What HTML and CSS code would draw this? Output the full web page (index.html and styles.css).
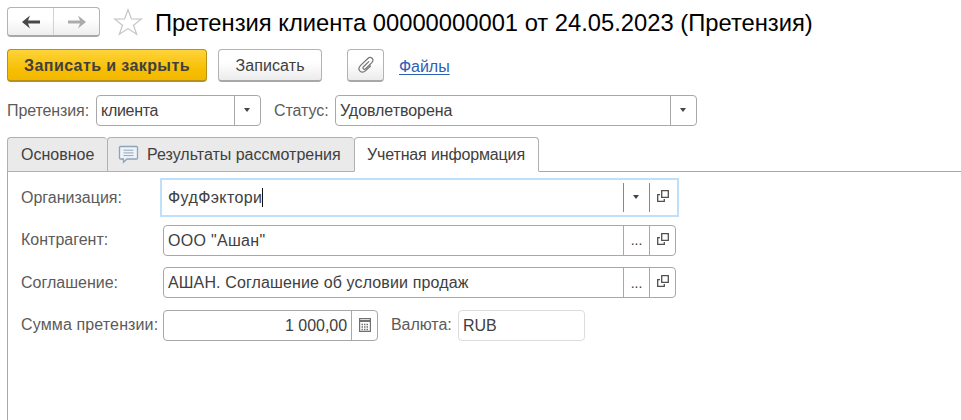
FILE: index.html
```html
<!DOCTYPE html>
<html lang="ru">
<head>
<meta charset="utf-8">
<title>Претензия клиента</title>
<link rel="stylesheet" href="styles.css">
</head>
<body>
<header class="titlebar">
  <div class="nav">
    <button class="nav-btn" aria-label="Назад"><svg width="18" height="14" viewBox="0 0 18 14"><path d="M0 7 8 .5 6 5.500H18v3H6L8 13.500z" fill="#484848"/></svg></button>
    <button class="nav-btn nav-next" aria-label="Вперед"><svg width="18" height="14" viewBox="0 0 18 14"><path d="M18 7 10 .5 12 5.500H0v3H12L10 13.500z" fill="#ababab"/></svg></button>
  </div>
  <svg class="star" width="30" height="28" viewBox="0 0 30 28"><path d="M15 1.800 18.400 10.900 28.300 11.100 20.500 17.200 23.700 26.200 15 20.600 6.300 26.200 9.500 17.200 1.700 11.100 11.600 10.900z" fill="#fff" stroke="#c3c5c9" stroke-width="1.200"/></svg>
  <h1 class="title">Претензия клиента 00000000001 от 24.05.2023 (Претензия)</h1>
</header>
<div class="commands">
  <button class="btn primary">Записать и закрыть</button>
  <button class="btn save">Записать</button>
  <button class="btn attach" aria-label="Файлы"><svg width="18" height="18" viewBox="0 0 18 18"><path d="M11.800 5.600 6.500 10.700C4.900 12.400 7 14.200 8.600 12.700L14.800 6.700C18 3.300 13.800-.4 10.600 2.700L3.600 9.400C-.6 13.800 4.600 18.500 8.700 14.600L13.500 10" fill="none" stroke="#757575" stroke-width="1.200" stroke-linecap="round"/></svg></button>
  <a class="files">Файлы</a>
</div>
<div class="filters">
  <span class="label claim">Претензия:</span>
  <div class="field kind"><span class="value">клиента</span><i class="cell"><b class="caret"></b></i></div>
  <span class="label status-label">Статус:</span>
  <div class="field status"><span class="value">Удовлетворена</span><i class="cell"><b class="caret"></b></i></div>
</div>
<nav class="tabs">
  <div class="tab main-tab">Основное</div>
  <div class="tab results-tab"><svg width="21" height="19" viewBox="0 0 21 19"><path d="M2.500 1.500H18.500Q19.500 1.500 19.500 2.500V13Q19.500 14 18.500 14H9L5.500 17.300V14H2.500Q1.500 14 1.500 13V2.500Q1.500 1.500 2.500 1.500z" fill="#edf3f8" stroke="#8ea3b7" stroke-width="1.300"/><path d="M5.500 5.200h10M5.500 7.900h10M5.500 10.600h10" stroke="#8fa8bf"/></svg><span>Результаты рассмотрения</span></div>
  <div class="tab active">Учетная информация</div>
</nav>
<main class="panel">
  <div class="row"><span class="label org">Организация:</span>
    <div class="field wide focused"><span class="value">ФудФэктори<b class="cursor"></b></span><i class="cell"><b class="caret"></b></i><i class="cell"><svg class="open" width="12" height="12" viewBox="0 0 12 12"><path d="M4.700.7h6.600v6.600H4.700zM3 4.700H.7v6.600h6.600V9" fill="none" stroke="#505050" stroke-width="1.300"/></svg></i></div></div>
  <div class="row"><span class="label contr">Контрагент:</span>
    <div class="field wide"><span class="value v-contr">ООО "Ашан"</span><i class="cell dots">...</i><i class="cell"><svg class="open" width="12" height="12" viewBox="0 0 12 12"><path d="M4.700.7h6.600v6.600H4.700zM3 4.700H.7v6.600h6.600V9" fill="none" stroke="#505050" stroke-width="1.300"/></svg></i></div></div>
  <div class="row"><span class="label agree">Соглашение:</span>
    <div class="field wide"><span class="value v-agree">АШАН. Соглашение об условии продаж</span><i class="cell dots">...</i><i class="cell"><svg class="open" width="12" height="12" viewBox="0 0 12 12"><path d="M4.700.7h6.600v6.600H4.700zM3 4.700H.7v6.600h6.600V9" fill="none" stroke="#505050" stroke-width="1.300"/></svg></i></div></div>
  <div class="row"><span class="label sum">Сумма претензии:</span>
    <div class="field amount"><span class="value number">1 000,00</span><i class="cell"><svg class="calc" width="12" height="14" viewBox="0 0 12 14"><path d="M.6.6h10.800v12.800H.6z" fill="#fff" stroke="#707070" stroke-width="1.200"/><path d="M1 3h10" stroke="#707070" stroke-width="2"/><path d="M2.500 6.500h7M2.500 9h7M2.500 11.500h7" stroke="#707070" stroke-width="1.400" stroke-dasharray="1.500 1"/></svg></i></div>
    <span class="label currency-label">Валюта:</span>
    <div class="field currency"><span class="value">RUB</span></div></div>
</main>
</body>
</html>
```
FILE: styles.css
```css
* { box-sizing: border-box; }
html, body { height: 100%; }
body {
  margin: 0;
  padding: 7px 0 0 7px;
  display: flex;
  flex-direction: column;
  overflow: hidden;
  background: #fff;
  color: #404040;
  font: 16px/20px "Liberation Sans", Arial, sans-serif;
  letter-spacing: -.05px;
  white-space: nowrap;
}
button { font: inherit; letter-spacing: inherit; color: inherit; padding: 0; }
svg { display: block; flex: none; }
.titlebar { display: flex; height: 30px; flex: none; }
.nav {
  display: flex;
  width: 93px;
  border: 1px solid #b3b3b3;
  border-bottom: 2px solid #a8a8a8;
  border-radius: 4px;
  background: linear-gradient(#fff 40%, #eee);
}
.nav-btn { flex: 1; border: 0; background: none; display: flex; align-items: center; justify-content: center; padding-top: 1px; }
.nav-next { border-left: 1px solid #d2d2d2; }
.star { margin: 1px 0 0 13px; }
.title { margin: 3px 0 0 12px; font-size: 23.75px; line-height: 26px; font-weight: 400; letter-spacing: 0; color: #000; }
.commands { display: flex; height: 33px; margin-top: 12px; flex: none; }
.btn {
  display: flex;
  align-items: center;
  justify-content: center;
  border: 1px solid #b3b3b3;
  border-bottom: 2px solid #a8a8a8;
  border-radius: 4px;
  background: linear-gradient(#fff 40%, #ececec);
}
.primary {
  width: 200px;
  padding-top: 2px;
  border-color: #b99018;
  background: linear-gradient(#ffd43a, #f6bd00 70%, #f2b800);
  font-weight: 700;
  letter-spacing: .4px;
}
.save { width: 104px; margin-left: 11px; padding-top: 2px; letter-spacing: .1px; }
.attach { width: 37px; margin-left: 25px; }
.files { margin: 8px 0 0 15px; color: #2c62b5; text-decoration: underline; text-underline-offset: 2px; }
.label { color: #5b5b5b; }
.filters { display: flex; align-items: center; height: 31px; margin-top: 13px; flex: none; }
.claim { width: 89px; letter-spacing: -.1px; }
.field {
  display: flex;
  align-items: stretch;
  height: 31px;
  border: 1px solid #a8a8a8;
  border-radius: 4px;
  background: #fff;
}
.value { flex: 1; min-width: 0; padding: 5px 0 0 4px; }
.cell { width: 26px; border-left: 1px solid #a8a8a8; display: flex; align-items: center; justify-content: center; font-style: normal; }
.caret { width: 0; border: 3.5px solid transparent; border-top: 4px solid #444; border-bottom: 0; margin: -2px 1px 0 0; }
.kind { width: 165px; }
.kind .value { letter-spacing: -.3px; }
.status-label { width: 61px; margin-left: 13px; }
.status { width: 362px; }
.tabs { display: flex; height: 35px; margin-top: 11px; flex: none; }
.tabs::after { content: ""; flex: 1; border-bottom: 1px solid #a8a8a8; }
.tab { display: flex; align-items: center; border: 1px solid #b0b0b0; border-right: 0; border-radius: 4px 4px 0 0; background: #eaeaea; }
.main-tab { width: 100px; padding-left: 13px; letter-spacing: 0; }
.results-tab { width: 247px; padding-left: 10px; gap: 8px; letter-spacing: 0; }
.active { width: 185px; padding-left: 12px; border-right: 1px solid #b0b0b0; border-bottom-color: #fff; background: #fff; letter-spacing: -.14px; }
.panel { flex: 1; display: flex; flex-direction: column; gap: 11.5px; padding: 10px 0 0 13px; border-left: 1px solid #a8a8a8; }
.row { display: flex; align-items: center; height: 31px; }
.row > .label:first-child { width: 142px; letter-spacing: 0; }
.row > .sum:first-child { letter-spacing: .13px; }
.wide { width: 513px; }
.v-contr { letter-spacing: .3px; }
.v-agree { letter-spacing: .13px; }
.focused { width: 519px; height: 39px; margin: -4px 0 -4px -3px; padding: 3px 2px; border: 2px solid #bfdffa; border-radius: 0; }
.focused .value { padding-top: 5px; letter-spacing: .4px; }
.focused .cell { border-left-color: #888; }
.cursor { display: inline-block; width: 1px; height: 19px; background: #111; vertical-align: -4px; }
.open { margin-top: -3px; }
.dots { font-size: 14px; }
.amount { width: 215px; }
.number { text-align: right; padding-right: 4px; }
.currency-label { width: 67px; margin-left: 13px; }
.currency { width: 127px; border-color: #ddd; }
```
